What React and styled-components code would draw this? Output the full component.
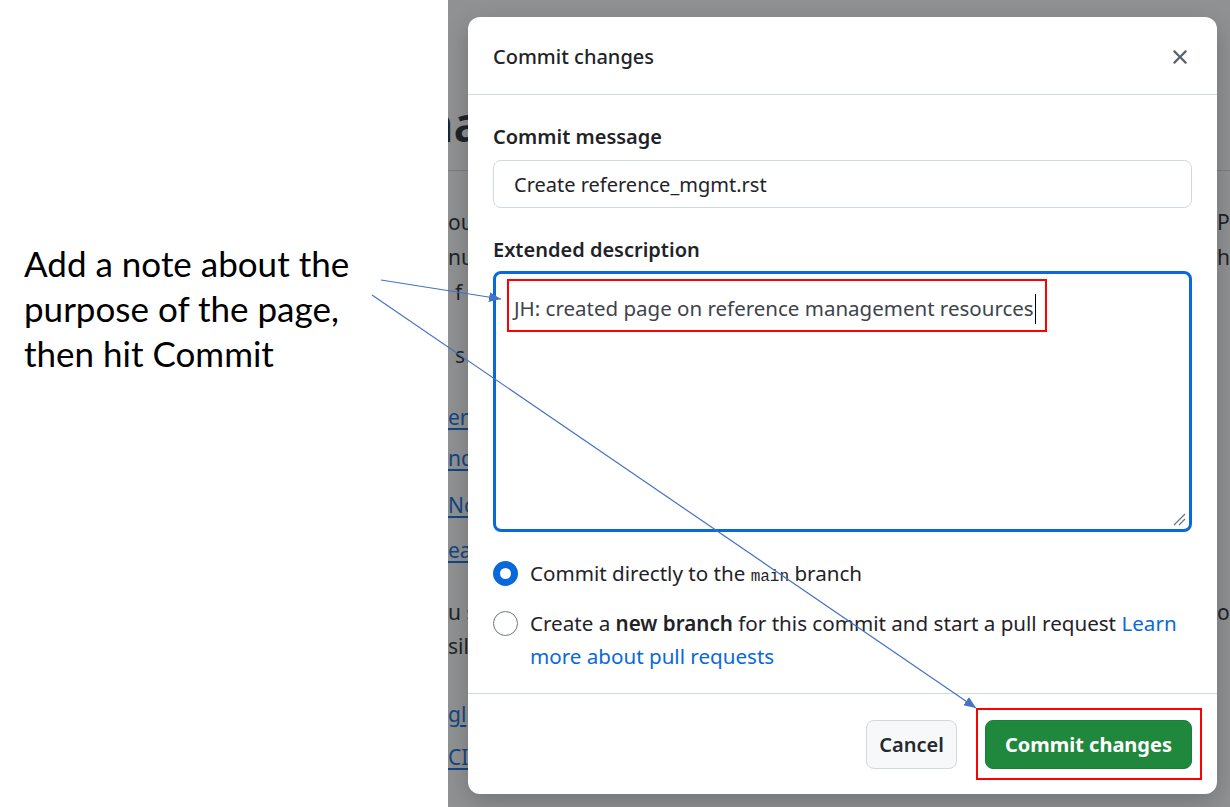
import React from "react";
import styled, { createGlobalStyle } from "styled-components";

const Global = createGlobalStyle`
  *, *::before, *::after { box-sizing: border-box; }
  html, body { margin: 0; padding: 0; }
  body {
    width: 1230px;
    height: 807px;
    overflow: hidden;
    background: #fff;
    font-family: "Noto Sans", "Open Sans", sans-serif;
  }
  #root { width: 1230px; height: 807px; }
`;

const Slide = styled.div`
  position: relative;
  width: 1230px;
  height: 807px;
  display: grid;
  grid-template-columns: 448px 782px;
  background: #fff;
`;

const Note = styled.div`
  padding: 241px 0 0 24px;
  font-family: Lato, "Open Sans", sans-serif;
  font-size: 35px;
  line-height: 45px;
  color: #000;
`;

const Frame = styled.div`
  position: relative;
  overflow: hidden;
  background: #fff;
`;

const Page = styled.div`
  display: flex;
  flex-direction: column;
  font-size: 21px;
  line-height: 34px;
  color: #1f2328;
`;

const PageTitle = styled.div`
  margin-top: 94px;
  margin-left: -25px;
  font-size: 48px;
  line-height: 60px;
  font-weight: 600;
  white-space: nowrap;
`;

const Rule = styled.div`
  margin-top: 16px;
  height: 1px;
  background: #d1d9e0;
`;

const PageLine = styled.div`
  display: grid;
  grid-template-columns: 769px 1fr;
  margin-top: ${(p) => p.$mt}px;
  white-space: nowrap;
`;

const Frag = styled.span`
  padding-left: ${(p) => p.$indent || 0}px;
  color: ${(p) => (p.$link ? "#0969da" : "#1f2328")};
  text-decoration: ${(p) => (p.$link ? "underline" : "none")};
  text-underline-offset: 3px;
  overflow: hidden;
`;

const Overlay = styled.div`
  position: absolute;
  inset: 0;
  background: rgba(31, 35, 40, 0.5);
  display: flex;
  padding: 17px 13px 13px 20px;
`;

const Dialog = styled.div`
  flex: 1;
  display: flex;
  flex-direction: column;
  background: #fff;
  border-radius: 12px;
  box-shadow: 0 8px 24px rgba(0, 0, 0, 0.2);
  overflow: hidden;
`;

const DialogHeader = styled.div`
  flex: none;
  height: 78px;
  display: flex;
  align-items: center;
  justify-content: space-between;
  padding: 2px 25px 0;
  border-bottom: 1px solid #d1d9e0;
`;

const Title = styled.div`
  font-size: 20px;
  font-weight: 500;
  color: #1f2328;
`;

const CloseButton = styled.div`
  width: 24px;
  height: 24px;
  display: flex;
  align-items: center;
  justify-content: center;
  color: #59636e;
`;

const Body = styled.div`
  flex: 1;
  display: flex;
  flex-direction: column;
  padding: 28px 25px 0;
`;

const Label = styled.div`
  margin-top: ${(p) => p.$mt || 0}px;
  font-size: 20px;
  line-height: 28px;
  font-weight: 600;
  color: #1f2328;
`;

const Input = styled.div`
  margin-top: 9px;
  height: 48px;
  border: 1px solid #d1d9e0;
  border-radius: 8px;
  padding: 0 20px;
  display: flex;
  align-items: center;
  font-size: 20px;
  color: #1f2328;
`;

const TextArea = styled.div`
  position: relative;
  margin-top: 7px;
  height: 261px;
  border: 3px solid #0969da;
  border-radius: 8px;
  padding: 20px 18px;
  font-size: 20.5px;
  line-height: 28px;
  color: #3d444d;
`;

const Caret = styled.span`
  display: inline-block;
  width: 1.5px;
  height: 30px;
  background: #000;
  vertical-align: middle;
  margin-left: 1px;
  margin-top: -4px;
`;

const Grip = styled.svg`
  position: absolute;
  right: 2px;
  bottom: 2px;
`;

const RadioRow = styled.div`
  margin-top: ${(p) => p.$mt}px;
  display: flex;
  align-items: flex-start;
  gap: 12px;
  font-size: 20.6px;
  line-height: 33px;
  color: #1f2328;
`;

const Radio = styled.span`
  flex: none;
  margin-top: 4px;
  width: 25px;
  height: 25px;
  border-radius: 50%;
  background: #fff;
  border: ${(p) => (p.$checked ? "7px solid #0969da" : "1.5px solid #6e7781")};
`;

const Mono = styled.code`
  font-family: "Liberation Mono", "DejaVu Sans Mono", monospace;
  font-size: 16px;
`;

const Strong = styled.b`
  font-weight: 600;
`;

const Link = styled.span`
  color: #0969da;
`;

const Footer = styled.div`
  flex: none;
  display: flex;
  justify-content: flex-end;
  gap: 28px;
  padding: 26px 25px 25px;
  border-top: 1px solid #d1d9e0;
`;

const Button = styled.div`
  height: 49px;
  display: flex;
  align-items: center;
  justify-content: center;
  padding: 0 ${(p) => (p.$primary ? 19 : 12)}px;
  border-radius: 8px;
  font-size: 20px;
  font-weight: ${(p) => (p.$primary ? 700 : 600)};
  color: ${(p) => (p.$primary ? "#fff" : "#25292e")};
  background: ${(p) => (p.$primary ? "#1f883d" : "#f6f8fa")};
  border: 1px solid ${(p) => (p.$primary ? "#1a7f37" : "#d1d9e0")};
`;

const Annotations = styled.svg`
  position: absolute;
  left: 0;
  top: 0;
  pointer-events: none;
`;

const lines = [
  { l: "ou", r: "Ph", mt: 34 },
  { l: "nu", r: "h", mt: 1 },
  { l: "f", indent: 7, mt: 1 },
  { l: "s", indent: 7, mt: 29 },
  { l: "erc", link: true, mt: 28 },
  { l: "nd", link: true, mt: 7 },
  { l: "No", link: true, mt: 13 },
  { l: "ea", link: true, mt: 11 },
  { l: "u s", r: "or", mt: 28 },
  { l: "sil", mt: 0 },
  { l: "gl", link: true, mt: 34 },
  { l: "CID", link: true, mt: 9 },
];

export default function App() {
  return (
    <>
      <Global />
      <Slide>
        <Note>
          Add a note about the
          <br />
          purpose of the page,
          <br />
          then hit Commit
        </Note>
        <Frame>
          <Page>
            <PageTitle>nagement</PageTitle>
            <Rule />
            {lines.map((ln, i) => (
              <PageLine key={i} $mt={ln.mt}>
                <Frag $indent={ln.indent} $link={ln.link}>
                  {ln.l}
                </Frag>
                <Frag>{ln.r || ""}</Frag>
              </PageLine>
            ))}
          </Page>
          <Overlay>
            <Dialog>
              <DialogHeader>
                <Title>Commit changes</Title>
                <CloseButton>
                  <svg width="24" height="24" viewBox="0 0 16 16" fill="currentColor">
                    <path d="M3.72 3.72a.75.75 0 0 1 1.06 0L8 6.94l3.22-3.22a.749.749 0 0 1 1.275.326.749.749 0 0 1-.215.734L9.06 8l3.22 3.22a.749.749 0 0 1-.326 1.275.749.749 0 0 1-.734-.215L8 9.06l-3.22 3.22a.751.751 0 0 1-1.042-.018.751.751 0 0 1-.018-1.042L6.94 8 3.72 4.78a.75.75 0 0 1 0-1.06Z" />
                  </svg>
                </CloseButton>
              </DialogHeader>
              <Body>
                <Label>Commit message</Label>
                <Input>Create reference_mgmt.rst</Input>
                <Label $mt={28}>Extended description</Label>
                <TextArea>
                  JH: created page on reference management resources
                  <Caret />
                  <Grip width="16" height="16" viewBox="0 0 16 16">
                    <path d="M14 3 L3 14 M14 8 L8 14" stroke="#6e7781" strokeWidth="1.3" fill="none" />
                  </Grip>
                </TextArea>
                <RadioRow $mt={25}>
                  <Radio $checked />
                  <span>
                    Commit directly to the <Mono>main</Mono> branch
                  </span>
                </RadioRow>
                <RadioRow $mt={13}>
                  <Radio />
                  <span>
                    Create a <Strong>new branch</Strong> for this commit and start a pull request{" "}
                    <Link>Learn more about pull requests</Link>
                  </span>
                </RadioRow>
              </Body>
              <Footer>
                <Button>Cancel</Button>
                <Button $primary>Commit changes</Button>
              </Footer>
            </Dialog>
          </Overlay>
        </Frame>
        <Annotations width="1230" height="807" viewBox="0 0 1230 807">
          <defs>
            <marker
              id="arrow"
              viewBox="0 0 12 10"
              refX="12"
              refY="5"
              markerWidth="12"
              markerHeight="10"
              markerUnits="userSpaceOnUse"
              orient="auto"
            >
              <path d="M0 0 L12 5 L0 10 Z" fill="#4472c4" />
            </marker>
          </defs>
          <line x1="381" y1="280" x2="501" y2="299" stroke="#4472c4" strokeWidth="1.2" markerEnd="url(#arrow)" />
          <line x1="372" y1="295" x2="976" y2="708" stroke="#4472c4" strokeWidth="1.2" markerEnd="url(#arrow)" />
          <rect x="508" y="280" width="538" height="51" fill="none" stroke="#ff0000" strokeWidth="2" />
          <rect x="977" y="709" width="224" height="70" fill="none" stroke="#ff0000" strokeWidth="2" />
        </Annotations>
      </Slide>
    </>
  );
}
